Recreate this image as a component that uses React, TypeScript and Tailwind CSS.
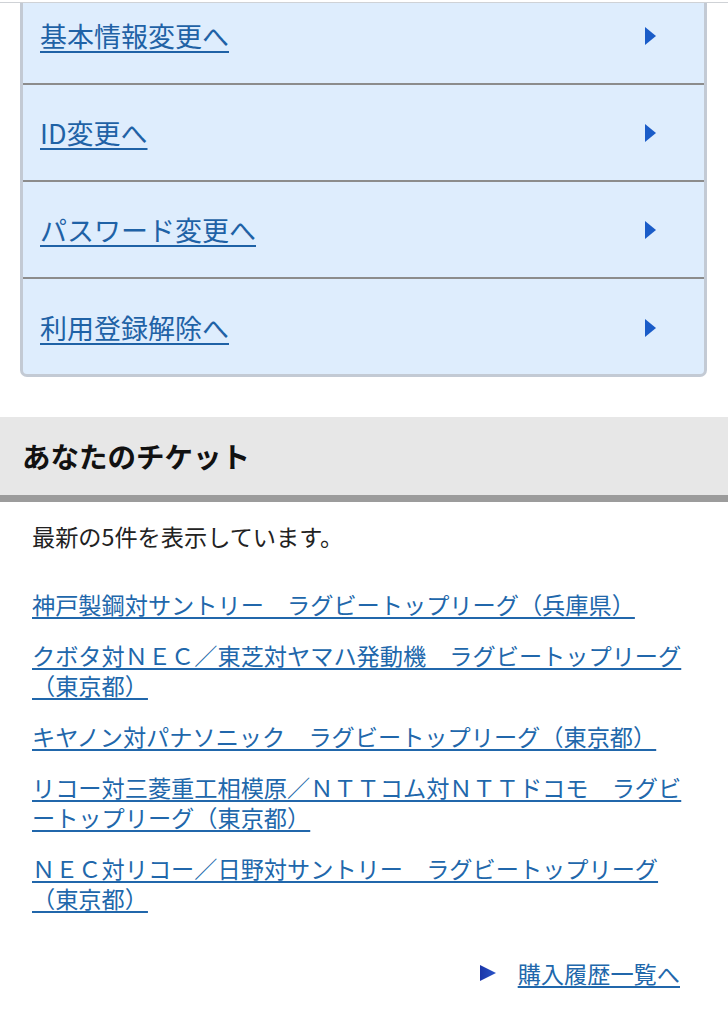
import React from "react";

const font = { fontFamily: '"Noto Sans CJK JP", "Noto Sans", sans-serif' };

function RowArrow() {
  return (
    <svg width="11" height="18" viewBox="0 0 11 18" className="shrink-0">
      <path d="M0 0 L11 9 L0 18 Z" fill="#1a5cc8" />
    </svg>
  );
}

const menu = ["基本情報変更へ", "ID変更へ", "パスワード変更へ", "利用登録解除へ"];

const tickets = [
  "神戸製鋼対サントリー　ラグビートップリーグ（兵庫県）",
  "クボタ対ＮＥＣ／東芝対ヤマハ発動機　ラグビートップリーグ（東京都）",
  "キヤノン対パナソニック　ラグビートップリーグ（東京都）",
  "リコー対三菱重工相模原／ＮＴＴコム対ＮＴＴドコモ　ラグビートップリーグ（東京都）",
  "ＮＥＣ対リコー／日野対サントリー　ラグビートップリーグ（東京都）",
];

export default function App() {
  return (
    <div className="w-[728px] min-h-[1024px] bg-white" style={font}>
      <div className="h-[2px] bg-white" />
      <div className="h-px bg-[#cfd2d6]" />
      <div className="ml-[20px] mr-[21px] bg-[#deedfd] border-x-[3px] border-b-[3px] border-[#c3cad4] rounded-b-[7px] overflow-hidden">
        {menu.map((m, i) => (
          <div
            key={m}
            className={
              (i === 0
                ? "h-[82px] pb-[14px] "
                : i === menu.length - 1
                ? "h-[95px] pt-[2px] "
                : "h-[97px] ") +
              (i < menu.length - 1 ? "border-b-2 border-[#8c8c8c] " : "") +
              "flex items-center justify-between pl-[17px] pr-[48px]"
            }
          >
            <a
              href="#"
              className="text-[27px] leading-[34px] text-[#1f62a6] underline decoration-[1.5px] underline-offset-[4px]"
            >
              {m}
            </a>
            <RowArrow />
          </div>
        ))}
      </div>

      <div className="mt-[40px] h-[85px] bg-[#e7e7e7] border-b-[7px] border-[#9c9c9c] flex items-center pl-[22px]">
        <h2 className="text-[28.5px] font-bold text-[#111] leading-[36px]">あなたのチケット</h2>
      </div>

      <div className="px-[32px] pt-[19px] pb-[40px]">
        <p className="text-[23.2px] leading-[30px] text-[#222]">最新の5件を表示しています。</p>
        <div className="mt-[38px] flex flex-col gap-[21px]">
          {tickets.map((t) => (
            <a
              key={t}
              href="#"
              className="block text-[23.2px] leading-[30px] text-[#2167ab] underline decoration-[1.5px] underline-offset-[3px]"
            >
              {t}
            </a>
          ))}
        </div>
        <div className="mt-[45px] flex items-center justify-end pr-[16px] gap-[22px]">
          <svg width="16" height="16" viewBox="0 0 16 16">
            <defs>
              <linearGradient id="tg" x1="0" y1="0" x2="1" y2="0">
                <stop offset="0" stopColor="#1a35a8" />
                <stop offset="1" stopColor="#2a55c8" />
              </linearGradient>
            </defs>
            <path d="M0 0 L16 8 L0 16 Z" fill="url(#tg)" />
          </svg>
          <a
            href="#"
            className="text-[23.2px] leading-[30px] text-[#2167ab] underline decoration-[1.5px] underline-offset-[3px]"
          >
            購入履歴一覧へ
          </a>
        </div>
      </div>
    </div>
  );
}
